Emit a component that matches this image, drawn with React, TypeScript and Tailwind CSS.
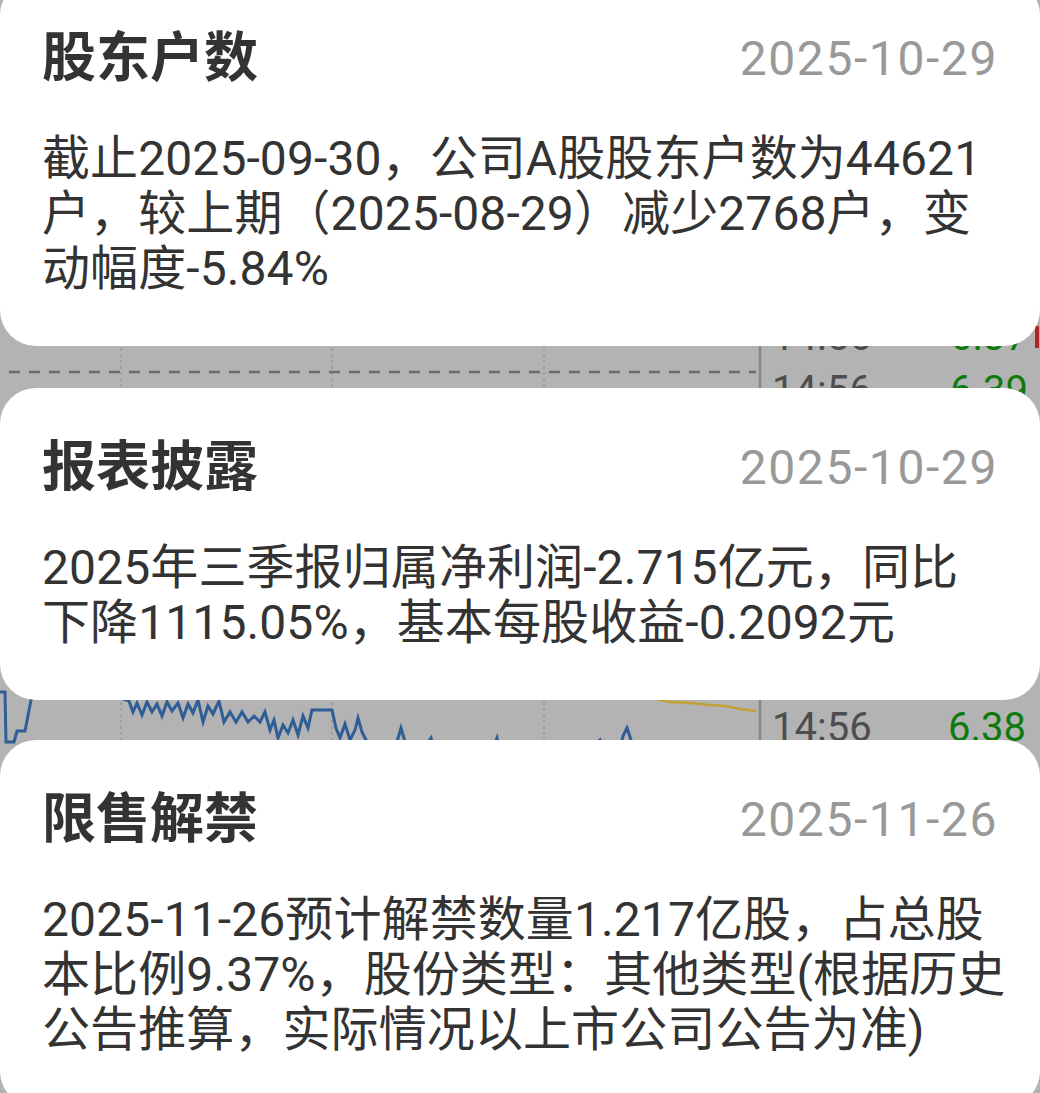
const FONT = "font-['Roboto','Noto_Sans_CJK_SC',sans-serif]";

type Notice = {
  title: string;
  date: string;
  lines: string[];
  top: string;
};

const notices: Notice[] = [
  {
    title: '股东户数',
    date: '2025-10-29',
    lines: [
      '截止2025-09-30，公司A股股东户数为44621',
      '户，较上期（2025-08-29）减少2768户，变',
      '动幅度-5.84%',
    ],
    top: 'mt-[-21px]',
  },
  {
    title: '报表披露',
    date: '2025-10-29',
    lines: ['2025年三季报归属净利润-2.715亿元，同比', '下降1115.05%，基本每股收益-0.2092元'],
    top: 'mt-[42px]',
  },
  {
    title: '限售解禁',
    date: '2025-11-26',
    lines: [
      '2025-11-26预计解禁数量1.217亿股，占总股',
      '本比例9.37%，股份类型：其他类型(根据历史',
      '公告推算，实际情况以上市公司公告为准)',
    ],
    top: 'mt-[40px]',
  },
];

// blue price line, only the bits between the cards show
const blue =
  '0,692 5,692 6,742 14,742 17,731 25,731 32,695 60,680 100,690 129,701 133,712 137,703 142,715 147,702 152,712 157,704 162,716 167,702 172,711 178,703 183,718 188,704 193,713 198,700 203,722 208,706 213,714 219,701 224,722 230,712 236,722 242,712 248,722 254,716 260,722 265,712 270,730 274,720 278,738 283,725 288,733 293,720 298,735 303,716 308,728 312,710 332,710 336,728 340,738 345,724 350,740 355,730 358,718 362,732 366,740 371,745 385,760 396,745 401,728 406,745 420,760 426,745 431,738 436,760 490,760 494,746 497,738 502,760 590,760 596,744 600,740 606,760 618,760 623,736 627,728 631,740 636,760 650,770';

const gold = '656,699 670,702 690,703 710,705 725,706 740,709 756,711';

function Chart() {
  return (
    <svg className="absolute inset-0" width="1040" height="1093" viewBox="0 0 1040 1093">
      {[121, 332, 544].map((x) => (
        <line key={x} x1={x} y1="0" x2={x} y2="1093" stroke="#9b9b9b" strokeWidth="1.5" strokeDasharray="3 3" />
      ))}
      <line x1="760" y1="0" x2="760" y2="1093" stroke="#888" strokeWidth="2.5" />
      <line x1="9" y1="372" x2="756" y2="372" stroke="#6b6b6b" strokeWidth="2.5" strokeDasharray="11 9" />
      <polyline points={blue} fill="none" stroke="#2f5d95" strokeWidth="3" strokeLinejoin="miter" />
      <polyline points={gold} fill="none" stroke="#c3a034" strokeWidth="2.5" />
      <g fontFamily="Roboto, sans-serif" fontSize="40">
        <text x="772" y="350" fill="#4d4d4d">14:56</text>
        <text x="950" y="350" fill="#0e7a0e">6.37</text>
        <text x="772" y="404" fill="#4d4d4d">14:56</text>
        <text x="950" y="404" fill="#0e7a0e">6.39</text>
        <text x="772" y="741" fill="#4d4d4d">14:56</text>
        <text x="948" y="741" fill="#0e7a0e">6.38</text>
      </g>
      <rect x="1035" y="326" width="4" height="22" fill="#b02525" />
    </svg>
  );
}

function Card({ n }: { n: Notice }) {
  return (
    <div className={`relative z-10 bg-white rounded-[36px] px-[42px] pt-[50px] pb-[50px] ${n.top}`}>
      <div className="flex items-center justify-between h-[60px]">
        <h2 className="text-[54px] font-bold text-[#333] leading-[60px]">{n.title}</h2>
        <span className="text-[48px] text-[#999] tracking-[1.6px] leading-[60px]">{n.date}</span>
      </div>
      <div className="mt-[42px] text-[48px] leading-[55px] text-[#333] tracking-[0.1px]">
        {n.lines.map((l) => (
          <div key={l} className="whitespace-nowrap">
            {l}
          </div>
        ))}
      </div>
    </div>
  );
}

export default function App() {
  return (
    <div className={`relative w-[1040px] h-[1093px] overflow-hidden bg-[#b3b3b3] ${FONT}`}>
      <Chart />
      {notices.map((n) => (
        <Card key={n.title} n={n} />
      ))}
    </div>
  );
}
